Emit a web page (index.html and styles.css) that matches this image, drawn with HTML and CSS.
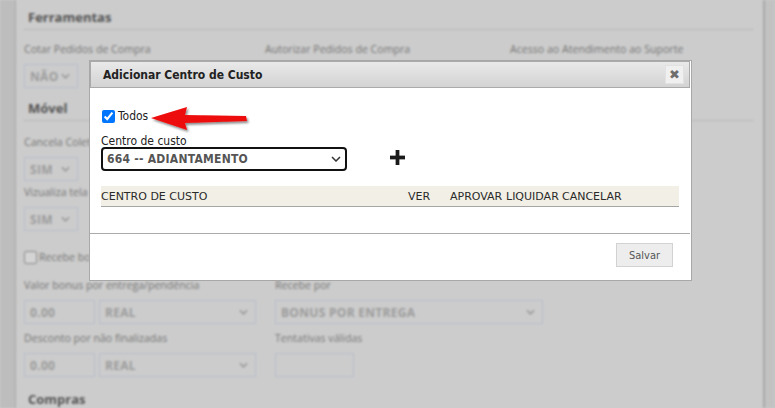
FILE: index.html
```html
<!DOCTYPE html>
<html lang="pt-BR">
<head>
<meta charset="utf-8">
<title>Adicionar Centro de Custo</title>
<link rel="stylesheet" href="styles.css">
</head>
<body>
<div class="page">
  <div class="rail-left"></div>
  <main class="panel">
    <h3 class="sec-title">Ferramentas</h3>
    <div class="grid3">
      <div class="field">
        <label class="lbl">Cotar Pedidos de Compra</label>
        <div class="bsel w54"><span>NÃO</span><svg class="chev" viewBox="0 0 10 6"><path d="M1 1l4 4 4-4" fill="none" stroke="#999" stroke-width="1.8"/></svg></div>
      </div>
      <div class="field">
        <label class="lbl">Autorizar Pedidos de Compra</label>
        <div class="bsel w54"><span>NÃO</span><svg class="chev" viewBox="0 0 10 6"><path d="M1 1l4 4 4-4" fill="none" stroke="#999" stroke-width="1.8"/></svg></div>
      </div>
      <div class="field">
        <label class="lbl">Acesso ao Atendimento ao Suporte</label>
        <div class="bsel w54"><span>NÃO</span><svg class="chev" viewBox="0 0 10 6"><path d="M1 1l4 4 4-4" fill="none" stroke="#999" stroke-width="1.8"/></svg></div>
      </div>
    </div>

    <h3 class="sec-title movel">Móvel</h3>
    <div class="field">
      <label class="lbl">Cancela Coleta pelo aplicativo</label>
      <div class="bsel w54"><span>SIM</span><svg class="chev" viewBox="0 0 10 6"><path d="M1 1l4 4 4-4" fill="none" stroke="#999" stroke-width="1.8"/></svg></div>
    </div>
    <div class="field">
      <label class="lbl">Vizualiza tela de entregas</label>
      <div class="bsel w54"><span>SIM</span><svg class="chev" viewBox="0 0 10 6"><path d="M1 1l4 4 4-4" fill="none" stroke="#999" stroke-width="1.8"/></svg></div>
    </div>
    <div class="chkrow"><span class="bchk"></span><span class="lbl">Recebe bonus por entrega</span></div>

    <div class="grid2">
      <div class="field">
        <label class="lbl">Valor bonus por entrega/pendência</label>
        <div class="pair">
          <div class="binput w70">0.00</div>
          <div class="bsel w157"><span>REAL</span><svg class="chev" viewBox="0 0 10 6"><path d="M1 1l4 4 4-4" fill="none" stroke="#999" stroke-width="1.8"/></svg></div>
        </div>
      </div>
      <div class="field">
        <label class="lbl">Recebe por</label>
        <div class="bsel w268"><span>BONUS POR ENTREGA</span><svg class="chev" viewBox="0 0 10 6"><path d="M1 1l4 4 4-4" fill="none" stroke="#999" stroke-width="1.8"/></svg></div>
      </div>
      <div class="field">
        <label class="lbl">Desconto por não finalizadas</label>
        <div class="pair">
          <div class="binput w70">0.00</div>
          <div class="bsel w157"><span>REAL</span><svg class="chev" viewBox="0 0 10 6"><path d="M1 1l4 4 4-4" fill="none" stroke="#999" stroke-width="1.8"/></svg></div>
        </div>
      </div>
      <div class="field">
        <label class="lbl">Tentativas válidas</label>
        <div class="binput w78"></div>
      </div>
    </div>

    <h3 class="sec-title last">Compras</h3>
  </main>
  <div class="rail-right"></div>
</div>

<div class="dialog">
  <div class="titlebar">
    <span class="title">Adicionar Centro de Custo</span>
    <button class="close" type="button" aria-label="Fechar">✖</button>
  </div>
  <div class="dbody">
    <label class="todos"><input type="checkbox" checked> Todos</label>
    <div class="clabel">Centro de custo</div>
    <div class="selrow">
      <div class="csel"><span>664 -- ADIANTAMENTO</span><svg class="cchev" viewBox="0 0 10 6"><path d="M1 1l4 4 4-4" fill="none" stroke="#333" stroke-width="1.5"/></svg></div>
      <svg class="plus" viewBox="0 0 16 16"><rect x="6" y="0" width="4" height="16" fill="#1a1a1a"/><rect x="0" y="6" width="16" height="4" fill="#1a1a1a"/></svg>
    </div>
    <div class="thead">
      <span>CENTRO DE CUSTO</span>
      <span>VER</span>
      <span>APROVAR</span>
      <span>LIQUIDAR</span>
      <span>CANCELAR</span>
    </div>
  </div>
  <div class="bpane">
    <button class="salvar" type="button">Salvar</button>
  </div>
  <svg class="arrow" viewBox="0 0 110 30" aria-hidden="true">
    <defs>
      <filter id="sh" x="-20%" y="-40%" width="140%" height="180%">
        <feDropShadow dx="1.5" dy="2" stdDeviation="1.3" flood-color="#000" flood-opacity="0.45"/>
      </filter>
    </defs>
    <polygon filter="url(#sh)" fill="#ee0a0a" points="2,14 38,3 36,11 97,12 98,17 36,19 38,26"/>
  </svg>
</div>
</body>
</html>
```

FILE: styles.css
```css
* { box-sizing: border-box; }
html, body { margin: 0; padding: 0; }
body {
  width: 775px;
  height: 408px;
  overflow: hidden;
  background: #cbcbcb;
  font-family: "DejaVu Sans", sans-serif;
  font-stretch: condensed;
  position: relative;
}

/* ---------- background page (greyed + blurred) ---------- */
.page {
  display: flex;
  height: 408px;
  filter: blur(1px);
}
.rail-left {
  width: 16px;
  background: #bdbdbd;
  border-right: 1px solid #a9a9a9;
}
.rail-right {
  width: 12px;
  background: #c2c2c2;
  border-left: 2px solid #a8a8a8;
}
.panel {
  flex: 1;
  background: #cccccc;
  padding: 9px 10px 0 8px;
  display: flex;
  flex-direction: column;
  font-family: "Open Sans", sans-serif;
  font-stretch: normal;
}
.sec-title {
  margin: 0 0 12px 0;
  padding: 0 0 4px 4px;
  font-size: 13px;
  line-height: 16px;
  font-weight: 700;
  color: #545454;
  border-bottom: 1px dotted #a4a4a4;
}
.sec-title.movel { margin-bottom: 14px; }
.sec-title.last { border-bottom: none; margin-top: 14px; }
.grid3 {
  display: grid;
  grid-template-columns: 241px 245px 1fr;
  margin-bottom: 8px;
}
.grid2 {
  display: grid;
  grid-template-columns: 251px 1fr;
  row-gap: 7px;
}
.field {
  display: flex;
  flex-direction: column;
  gap: 8px;
  margin-bottom: 4px;
}
.grid2 .field { margin-bottom: 0; }
.lbl {
  font-size: 10.6px;
  line-height: 14px;
  color: #767676;
  white-space: nowrap;
}
.bsel, .binput {
  height: 24px;
  border: 1px solid #b6bdca;
  display: flex;
  align-items: center;
  justify-content: space-between;
  padding: 0 7px 0 5px;
  font-size: 12px;
  font-weight: 700;
  color: #9c9c9c;
  letter-spacing: 0.3px;
}
.chev { width: 9px; height: 6px; }
.w54 { width: 54px; }
.w70 { width: 71px; }
.w78 { width: 79px; }
.w157 { width: 157px; }
.w268 { width: 268px; }
.pair { display: flex; gap: 4px; }
.chkrow {
  display: flex;
  align-items: center;
  gap: 2px;
  margin: 15px 0 14px 0;
}
.bchk {
  width: 13px; height: 13px;
  border: 1px solid #8a8a8a;
  border-radius: 2px;
  background: #d4d4d4;
}

/* ---------- dialog ---------- */
.dialog {
  position: absolute;
  left: 89px;
  top: 60px;
  width: 603px;
  height: 221px;
  background: #fff;
  border: 1px solid #a8a8a8;
  padding: 0 1px 0 0;
  display: flex;
  flex-direction: column;
  font-family: "DejaVu Sans", sans-serif;
  font-stretch: condensed;
  color: #222;
}
.titlebar {
  height: 27px;
  border: 1px solid #aaaaaa;
  background: linear-gradient(#e9e9e9, #d3d3d3);
  display: flex;
  align-items: center;
  justify-content: space-between;
  padding: 0 5px 0 12px;
}
.title {
  font-size: 12px;
  font-weight: 700;
  color: #222;
}
.close {
  width: 19px;
  height: 19px;
  border: 1px solid #e2e2e2;
  background: #f0f0f0;
  color: #6e6e6e;
  font-size: 13px;
  line-height: 1;
  padding: 0;
  display: flex;
  align-items: center;
  justify-content: center;
  font-family: "DejaVu Sans", sans-serif;
}
.dbody {
  flex: 1;
  padding: 21px 11px 0 11px;
  display: flex;
  flex-direction: column;
}
.todos {
  display: flex;
  align-items: center;
  font-size: 12px;
  line-height: 14px;
  color: #222;
  gap: 3px;
  margin-left: 1px;
}
.todos input {
  margin: 0;
  width: 13px;
  height: 13px;
}
.clabel {
  margin-top: 12px;
  font-size: 12px;
  line-height: 13px;
  color: #222;
}
.selrow {
  display: flex;
  align-items: flex-start;
  gap: 43px;
  margin-top: -1px;
}
.csel {
  width: 246px;
  height: 24px;
  border: 2px solid #111;
  border-radius: 4px;
  display: flex;
  align-items: center;
  justify-content: space-between;
  padding: 0 4px 0 4px;
  font-size: 12px;
  font-weight: 700;
  color: #555;
  letter-spacing: 0.25px;
}
.cchev { width: 10px; height: 6px; }
.plus { width: 15px; height: 15px; margin-top: 3px; }
.thead {
  margin-top: 15px;
  height: 21px;
  background: #f2f0e6;
  border-bottom: 1px solid #a5a5a5;
  display: grid;
  grid-template-columns: 307px 42px 56px 56px 1fr;
  align-items: center;
  font-size: 11px;
  font-stretch: normal;
  color: #2a2a2a;
}
.bpane {
  height: 47px;
  border-top: 1px solid #aaaaaa;
  display: flex;
  justify-content: flex-end;
  align-items: flex-start;
  padding: 9px 17px 0 0;
}
.salvar {
  width: 57px;
  height: 24px;
  background: #ededed;
  border: 1px solid #d2d2d2;
  color: #555;
  font-family: "DejaVu Sans", sans-serif;
  font-stretch: condensed;
  font-size: 11px;
  padding: 0;
}
.arrow {
  position: absolute;
  left: 59px;
  top: 43px;
  width: 110px;
  height: 30px;
}
```
